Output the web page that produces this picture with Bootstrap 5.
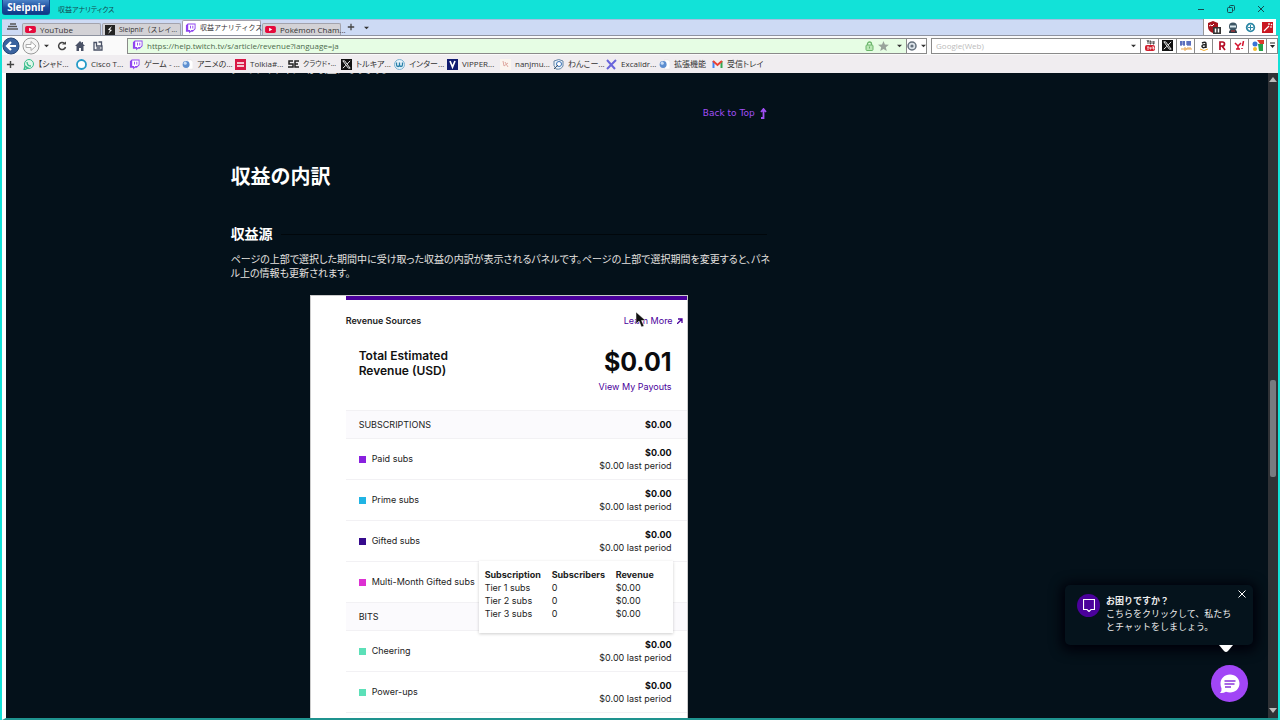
<!DOCTYPE html>
<html lang="ja">
<head>
<meta charset="utf-8">
<meta name="viewport" content="width=device-width, initial-scale=1">
<title>収益アナリティクス</title>
<link href="https://cdn.jsdelivr.net/npm/bootstrap@5.3.0/dist/css/bootstrap.min.css" rel="stylesheet">
<style>
:root{--teal:#12e2d8;--ink:#04111a;--violet:#4b019b}
body{font-family:"Open Sans","Noto Sans CJK JP",sans-serif;font-size:9px;line-height:12px;color:#333;background:var(--teal)}
svg{flex:none;display:block}
button{border:0;background:none;padding:0;color:inherit}
.ui{font-feature-settings:"palt";font-size:8px}
.titlebar{height:19px;color:#124b50}
.compact{font-size:7px}
.brand{width:48px;height:15px;margin-left:2px;background:linear-gradient(#4a83c8,#1c4c9c 55%,#0d3b86);color:#fff;font:bold 10px/14px "Noto Sans",sans-serif;border-radius:0 0 3px 3px;border:1px solid #16458e;border-top:0}
.winbtn{width:30px;height:17px}
.tabrow{height:16px;background:#cddaf4;border-top:1px solid #a9bde0;margin-left:2px}
.tab{width:79px;height:12px;margin-right:1px;background:#d3d2d6;border:1px solid #a3a3ad;border-bottom:0;padding:0 2px;border-radius:2px 2px 0 0;color:#333}
.tab.current{background:#fff;height:15px}
.exts{width:73px;background:#fff;border-left:1px solid #999;height:16px}
.chrome{background:#f0edf0;margin:0 2px 0 2px}
.address{height:20px;background:#fafafa;border-top:1px solid #8e93a0}
.forward{margin-left:2px}
.box{height:16px;border:1px solid #8a8a8a;background:#fff}
.url{background:#e6fde4}
input.plain{border:0;background:none;outline:0;padding:0;height:14px;color:#4c6b4c;font-size:8px;min-width:0}
input.find::placeholder{color:#bbb;opacity:1}
.engine{width:18px;height:14px;border-left:1px solid #8a8a8a}
.marks{height:18px;padding-left:4px}
.marks a{width:53px;color:#333;text-decoration:none;white-space:nowrap}
.page{background:var(--ink);margin:0 2px 0 2px;border-left:4px solid #fff;border-bottom:2px solid #1f938f;color:#e6e3e0;min-height:0}
.article{width:536px;margin-left:17.8%;font-family:"DejaVu Sans","Noto Sans CJK JP",sans-serif}
.article p{font-size:10px;line-height:14px;font-feature-settings:"palt";white-space:nowrap}
.clip{margin-top:-10px}
.totop{color:#a14ff5;font-size:9px;text-decoration:none;margin-top:30px}
h1{font:bold 20px/28px "Noto Sans CJK JP",sans-serif;color:#fff;margin:43px 0 0}
h2{font:bold 14px/20px "Noto Sans CJK JP",sans-serif;color:#fff;margin:33px 0 0}
.rule{height:1px;background:#000;opacity:.55}
.lead-text{margin-top:10px}
.panel{width:378px;margin:14px auto 0;padding-left:35px;background:#fff;color:#222;font-family:Inter,sans-serif;border:1px solid #ccc;border-width:1px 1px 0}
.bar{height:4px;background:var(--violet)}
.panel a{color:var(--violet);text-decoration:none}
.panel b{color:#0b0b0e;font-weight:700}
.head{margin-top:15px}
.total{height:83px;padding:21px 15px 0 13px}
.total h3{font:600 12px/15px Inter,sans-serif;margin:0;color:#111}
.total strong{font:bold 25px/28px Inter,sans-serif;color:#0b0b0e}
.payouts{margin-top:5px}
.sect{height:28px;padding:0 15px 0 13px;background:#fbfafd;border-top:1px solid #f2f1f4}
.line{height:41px;padding:0 15px 0 13px;border-top:1px solid #f2f1f4}
.small-amt{line-height:13px}
.swatch{width:7px;height:7px;margin-right:6px}
.tip{left:133px;top:-1px;width:194px;height:72px;background:#fff;box-shadow:0 1px 3px #0003;padding:7px 0 0 6px;z-index:2}
.tip table{font-size:9px;line-height:13px;color:#222}
.tip th,.tip td{padding:0}
.pointer{left:290px;top:-3px}
.scroll{width:10px;background:#303236}
.thumb{width:6px;height:97px;background:#777b80;border-radius:2px;margin-top:297px}
.help{right:25px;bottom:73px;width:188px;height:60px;background:#05131c;border-radius:5px;box-shadow:0 2px 12px 4px #00000a;padding:9px 8px 0 12px;color:#eee;line-height:13px}
.help .face{width:23px;height:23px;background:var(--violet);flex:none}
.help .words{margin-left:6px}
.help .x{right:7px;top:5px}
.help .tail{right:20px;bottom:-7px}
.chat{right:30px;bottom:16px;width:37px;height:37px;background:#a146f6}
</style>
</head>
<body class="vh-100 d-flex flex-column overflow-hidden">
<svg width="0" height="0" class="position-absolute" aria-hidden="true">
 <symbol id="yt" viewBox="0 0 12 10"><rect y="1" width="12" height="8" rx="2" fill="#e5093c"/><path d="M4.500 3v4L8 5z" fill="#fff"/></symbol>
 <symbol id="tw" viewBox="0 0 12 12"><path d="M3 .5h8.500v6L8.500 9.500H6.500L4.500 11.500V9.500H1v-7z" fill="#8f43f0"/><path d="M3.500 1.500h7V6L9 7.500H7L5.500 9V7.500h-2z" fill="#fff"/><path d="M6 3v3M8.500 3v3" stroke="#8f43f0"/></symbol>
 <symbol id="down" viewBox="0 0 6 4"><path d="M0 .5h6l-3 3z" fill="currentColor"/></symbol>
 <symbol id="plus" viewBox="0 0 10 10"><path d="M5 1v8M1 5h8" stroke="#444" stroke-width="1.600"/></symbol>
 <symbol id="xx" viewBox="0 0 12 12"><path fill="#111" d="M0 0h12v12H0z"/><path d="M2 2h2l6 8H8z" fill="none" stroke="#fff"/><path d="M10 2 6.700 5.500M5.200 7 2 10" stroke="#fff"/></symbol>
 <symbol id="globe" viewBox="0 0 12 12"><path d="M6 1h4l2 2v8H6z" fill="#fff" stroke="#ddd" stroke-width=".5"/><circle cx="4.500" cy="6" r="3.800" fill="#5d8fd0"/><circle cx="3.500" cy="4.500" r="1.700" fill="#c8def6"/></symbol>
</svg>

<header class="titlebar ui d-flex align-items-start flex-shrink-0 me-1">
 <div class="brand text-center">Sleipnir</div>
 <span class="compact ms-2 mt-1 flex-grow-1">収益アナリティクス</span>
 <button class="winbtn" aria-label="最小化"><svg class="m-auto" width="8" height="8"><path d="M1 4.500h6" stroke="#124b50"/></svg></button>
 <button class="winbtn" aria-label="元に戻す"><svg class="m-auto" width="8" height="8" fill="none" stroke="#124b50"><rect x=".5" y="2.500" width="5" height="5" rx="1"/><path d="M2.500 2V1.500a1 1 0 0 1 1-1h3a1 1 0 0 1 1 1v3a1 1 0 0 1-1 1"/></svg></button>
 <button class="winbtn" aria-label="閉じる"><svg class="m-auto" width="8" height="8"><path d="m1 1 6 6m0-6L1 7" stroke="#124b50"/></svg></button>
</header>

<nav class="tabrow ui d-flex align-items-end flex-shrink-0 me-1">
 <button class="mb-1 ms-1" aria-label="タブ一覧"><svg width="16" height="8"><path d="M4 1h6M2 3.500h9M1 6h11" stroke="#555" stroke-width="1.300"/></svg></button>
 <button class="tab d-flex align-items-center gap-1"><svg width="11" height="9"><use href="#yt"/></svg><span>YouTube</span></button>
 <button class="tab d-flex align-items-center gap-1"><svg width="10" height="10"><rect width="10" height="10" fill="#222"/><path d="M7 1 3 4.500l2 1L3 9l4-4-2-.5z" fill="#fff"/></svg><span class="text-nowrap compact">Sleipnir（スレイ...</span></button>
 <button class="tab current d-flex align-items-center gap-1"><svg width="11" height="11"><use href="#tw"/></svg><span class="text-nowrap compact">収益アナリティクス</span></button>
 <button class="tab d-flex align-items-center gap-1"><svg width="11" height="9"><use href="#yt"/></svg><span class="text-nowrap">Pokémon Cham...</span></button>
 <button class="ms-1 mb-1" aria-label="新しいタブ"><svg width="10" height="8" viewBox="0 0 10 10"><use href="#plus"/></svg></button>
 <button class="ms-1 px-1 mb-1" aria-label="タブメニュー"><svg width="5" height="6"><use href="#down"/></svg></button>
 <div class="exts ms-auto d-flex align-items-center justify-content-around">
  <svg width="15" height="13"><path d="M1 2 6 0l5 2v4q0 4-5 6-5-2-5-6z" fill="#a5121c"/><path d="M2 5q2-2 3 0l2-2" stroke="#fff" fill="none"/><rect x="6" y="6" width="8" height="7" fill="#333"/><path d="M8.500 7.500v4M11.500 7.500v4" stroke="#fff" stroke-width="1.500"/></svg>
  <svg width="10" height="11"><circle cx="5" cy="4.500" r="4" fill="#3d5564"/><path d="M2 4.500h6" stroke="#d9e9ee" stroke-width="2"/><path d="M1 11q0-4 4-3 4-1 4 3z" fill="#263844"/><path d="M3 9h4" stroke="#d33"/></svg>
  <svg width="11" height="11"><circle cx="5.500" cy="5.500" r="3.800" fill="#fff" stroke="#2c87a5" stroke-width="1.800"/><path d="M5.500 3v5M3 5.500h5" stroke="#2c87a5"/></svg>
  <svg width="11" height="11"><rect width="11" height="11" fill="#c91721"/><path d="m2 9 5-5M7 1v2M9 3l1-1M8 5h2" stroke="#fff" stroke-width="1.200"/></svg>
 </div>
</nav>

<section class="chrome ui flex-shrink-0">
 <div class="address d-flex align-items-center">
  <button aria-label="戻る"><svg width="18" height="18"><circle cx="9" cy="9" r="8" fill="#3a639f" stroke="#264778"/><path d="M14 9H5m4-4L5 9l4 4" fill="none" stroke="#fff" stroke-width="2.200"/></svg></button>
  <button class="forward" aria-label="進む"><svg width="18" height="18"><circle cx="9" cy="9" r="8" fill="#f5f5f5" stroke="#999"/><path d="M4 7.500h5V4.500L14 9l-5 4.500v-3H4z" fill="#fff" stroke="#aaa"/></svg></button>
  <button class="px-1" aria-label="履歴"><svg width="5" height="4"><use href="#down"/></svg></button>
  <button class="ms-1" aria-label="再読み込み"><svg width="10" height="10"><path d="M7.500 2.500A3.500 3.500 0 1 0 8.500 6" fill="none" stroke="#444" stroke-width="1.500"/><path d="M5 3.500h4v-3z" fill="#444"/></svg></button>
  <button class="ms-2" aria-label="ホーム"><svg width="10" height="10"><path d="M5 0 0 5h1.500v5h2.500V7h2v3h2.500V5H10L8 3V1H7v1z" fill="#4a5266"/></svg></button>
  <button class="ms-2" aria-label="ページ"><svg width="10" height="10" fill="none" stroke="#4a5266" stroke-width="1.300"><path d="M1 9V1.500h2.500V5H9v4zM5.500 1h3v4M3.500 7h4"/></svg></button>
  <div class="box url d-flex align-items-center flex-grow-1 ms-4 px-1 gap-1">
   <svg width="11" height="11"><use href="#tw"/></svg>
   <input class="plain flex-grow-1" aria-label="アドレス" value="https://help.twitch.tv/s/article/revenue?language=ja">
   <svg width="9" height="10"><path d="M2.500 4V3a2 2 0 0 1 4 0v1" fill="none" stroke="#6bb56b" stroke-width="1.300"/><rect x="1" y="4" width="7" height="5.500" rx="1" fill="#b9e7b4" stroke="#6bb56b"/><path d="M4.500 5.500v2" stroke="#6bb56b"/></svg>
   <svg width="11" height="10" class="me-1"><path d="m5.500 0 1.400 3.500 4 .2-3.100 2.500 1 3.800-3.300-2.100L2.200 10l1-3.800L0 3.700l4-.2z" fill="#98a39b"/></svg>
   <svg width="5" height="4"><use href="#down"/></svg>
  </div>
  <button class="box border-start-0 d-flex align-items-center gap-1" aria-label="設定"><svg width="10" height="10"><circle cx="5" cy="5" r="4" fill="#dce4ea" stroke="#65717d" stroke-width="1.500"/><circle cx="5" cy="5" r="1.600" fill="#65717d"/></svg><svg width="5" height="4"><use href="#down"/></svg></button>
  <div class="box ms-1 d-flex align-items-center" style="width:347px">
   <input class="plain find flex-grow-1 ps-1" aria-label="検索" placeholder="Google(Web)">
   <svg width="5" height="4" class="me-1"><use href="#down"/></svg>
   <div class="engine d-flex"><svg class="m-auto" width="12" height="12"><rect x="1" y="5" width="10" height="6" rx="2" fill="#d0202e"/><path d="m3 0 1 2 1-2M4 2v2M6 1v3h1V1zM9 1v3h1V1" fill="none" stroke="#222" stroke-width=".8"/><path d="M3 7h2M4 7v3M6 7v2h1V7M9 6v3h1V7.500H9" fill="none" stroke="#fff" stroke-width=".8"/></svg></div>
   <div class="engine d-flex"><svg class="m-auto" width="11" height="11"><use href="#xx"/></svg></div>
   <div class="engine d-flex"><svg class="m-auto" width="12" height="10"><path d="M0 1h5M0 3h5M1 0v5M4 0v5M6 1h5M6 3h5M8 0v5M10 0v5" stroke="#2640a8"/><path d="M2 7v2M4 7h2v2H4zM7 9V7h4v2M9 7v2" stroke="#e7a24c" fill="none"/></svg></div>
   <div class="engine d-flex"><svg class="m-auto" width="10" height="12"><path d="M3 3q4-2 4 1v4M7 5Q3 4 3 6.500 4 9 7 6.500" fill="none" stroke="#222" stroke-width="1.500"/><path d="M1 9q4 3 8 0" fill="none" stroke="#f2ad32"/></svg></div>
   <div class="engine d-flex"><svg class="m-auto" width="8" height="10"><path d="M2 9V1h2.500a2 2 0 0 1 0 4H2m2 0 3 4" fill="none" stroke="#b50d27" stroke-width="1.700"/></svg></div>
   <div class="engine d-flex"><svg class="m-auto" width="11" height="9"><path d="m1 2 3 3 3-3M4 5v3M2 8h4M9.500 0 8.500 5M8 7v1" fill="none" stroke="#d3112c" stroke-width="1.500"/></svg></div>
   <div class="engine d-flex"><svg class="m-auto" width="12" height="11"><path d="M5 0h7v4H8z" fill="#dd3b2b"/><path d="M6 4h5v7H7z" fill="#26a14b"/><circle cx="3" cy="4" r="2.500" fill="#3974d6"/><circle cx="3" cy="9" r="2" fill="#f3ba2c"/></svg></div>
   <button class="engine d-flex" style="width:11px" aria-label="その他"><svg class="m-auto" width="7" height="7"><path d="M1 1h5" stroke="#222"/><path d="M1 3h5L3.500 6z" fill="#222"/></svg></button>
  </div>
 </div>
 <nav class="marks d-flex align-items-center">
  <button class="me-2" aria-label="追加"><svg width="9" height="9" viewBox="0 0 10 10"><use href="#plus"/></svg></button>
  <a href="#" class="d-flex align-items-center gap-1"><svg width="11" height="11"><circle cx="6" cy="5" r="4.500" fill="#dff7ea" stroke="#39bd8c"/><path d="M1 11 2 7l3 2zM4 3q0 4 4 4" fill="none" stroke="#39bd8c" stroke-width="1.300"/></svg>【シャド...</a>
  <a href="#" class="d-flex align-items-center gap-1"><svg width="11" height="11"><circle cx="5.500" cy="5.500" r="4.500" fill="#fff" stroke="#239ac7" stroke-width="1.800"/></svg>Cisco T...</a>
  <a href="#" class="d-flex align-items-center gap-1"><svg width="11" height="11"><use href="#tw"/></svg>ゲーム - ...</a>
  <a href="#" class="d-flex align-items-center gap-1"><svg width="11" height="11"><use href="#globe"/></svg>アニメの...</a>
  <a href="#" class="d-flex align-items-center gap-1"><svg width="11" height="11"><rect width="11" height="11" fill="#d81745"/><path d="M2 4h7M2 7h7" stroke="#fff" stroke-width="1.500"/></svg>Tolkia#...</a>
  <a href="#" class="d-flex align-items-center gap-1"><svg width="11" height="8"><path d="M5 1H1v3h4v3H0M11 1H7v6h4M7 4h3" fill="none" stroke="#222" stroke-width="1.500"/></svg><span class="compact">クラウド・...</span></a>
  <a href="#" class="d-flex align-items-center gap-1"><svg width="11" height="11"><use href="#xx"/></svg>トルキア...</a>
  <a href="#" class="d-flex align-items-center gap-1"><svg width="11" height="11"><circle cx="5.500" cy="5.500" r="5" fill="#e6f3fa" stroke="#79b1d1"/><path d="M2.500 3.500v2q0 2 1.500 2t1.500-2v-2 2q0 2 1.500 2t1.500-2v-2" fill="none" stroke="#287fa8" stroke-width="1.300"/></svg>インター...</a>
  <a href="#" class="d-flex align-items-center gap-1"><svg width="11" height="11"><rect width="11" height="11" fill="#101c70"/><path d="m3 2 2.500 6L8 2" fill="none" stroke="#fff" stroke-width="1.700"/></svg>VIPPER...</a>
  <a href="#" class="d-flex align-items-center gap-1"><svg width="11" height="11"><rect width="11" height="11" fill="#fbf5ee"/><path d="m3 2 1 5 4-3M5 3l3 5" stroke="#dfaaa0" fill="none"/></svg>nanjmu...</a>
  <a href="#" class="d-flex align-items-center gap-1"><svg width="11" height="11"><path d="M1 2q5-3 9 0v5q-2 4-7 3Q0 7 1 2z" fill="#e9f1f8" stroke="#6485a6"/><circle cx="6" cy="5" r="2.500" fill="#fff" stroke="#3972b8"/><path d="m1 10 4-4" stroke="#456"/></svg>わんこー...</a>
  <a href="#" class="d-flex align-items-center gap-1"><svg width="11" height="11"><path d="m1 1 8 9M10 1 1 10" stroke="#6965db" stroke-width="2"/></svg>Excalidr...</a>
  <a href="#" class="d-flex align-items-center gap-1"><svg width="11" height="11"><use href="#globe"/></svg>拡張機能</a>
  <a href="#" class="d-flex align-items-center gap-1"><svg width="11" height="9"><path d="M1.500 8V1" stroke="#4285f4" stroke-width="2"/><path d="M9.500 8V1" stroke="#34a853" stroke-width="2"/><path d="m1 1 4.500 4L10 1" fill="none" stroke="#ea4335" stroke-width="2"/></svg>受信トレイ</a>
 </nav>
</section>

<div class="page d-flex flex-grow-1 position-relative overflow-hidden">
 <main class="flex-grow-1 overflow-hidden">
  <article class="article">
   <p class="clip mb-0">クリップやチャットが収益になります。</p>
   <div class="d-flex justify-content-end"><a href="#" class="totop d-flex align-items-center gap-1">Back to Top <svg width="8" height="11"><path d="M2 10h2.500V2M2 4l2.500-3L7 4" fill="none" stroke="#a14ff5" stroke-width="1.800"/></svg></a></div>
   <h1>収益の内訳</h1>
   <div class="d-flex align-items-end"><h2>収益源</h2><div class="rule flex-grow-1 ms-2 mb-2"></div></div>
   <p class="lead-text mb-0">ページの上部で選択した期間中に受け取った収益の内訳が表示されるパネルです。ページの上部で選択期間を変更すると、パネ<br>ル上の情報も更新されます。</p>
   <section class="panel">
    <div class="bar"></div>
    <div class="head d-flex justify-content-between pe-1 position-relative">
     <span class="fw-semibold">Revenue Sources</span>
     <a href="#" class="d-flex align-items-center gap-1">Learn More <svg width="6" height="6"><path d="M1 1h4v4M5 1 0 6" fill="none" stroke="#4b019b" stroke-width="1.300"/></svg></a>
     <svg class="pointer position-absolute" width="10" height="16"><path d="M0 0v12l3-3 2.500 6L8 14 5.500 8.500H9.500z" fill="#111" stroke="#fff" stroke-width=".5"/></svg>
    </div>
    <div class="total d-flex justify-content-between">
     <h3>Total Estimated<br>Revenue (USD)</h3>
     <div class="text-end"><strong class="d-block">$0.01</strong><a href="#" class="payouts d-block">View My Payouts</a></div>
    </div>
    <div class="sect d-flex align-items-center justify-content-between"><span>SUBSCRIPTIONS</span><b>$0.00</b></div>
    <div class="line d-flex align-items-center"><i class="swatch" style="background:#8920df"></i><span class="flex-grow-1">Paid subs</span><div class="text-end small-amt"><b>$0.00</b><br>$0.00 last period</div></div>
    <div class="line d-flex align-items-center"><i class="swatch" style="background:#20b4e4"></i><span class="flex-grow-1">Prime subs</span><div class="text-end small-amt"><b>$0.00</b><br>$0.00 last period</div></div>
    <div class="line d-flex align-items-center"><i class="swatch" style="background:#360a8d"></i><span class="flex-grow-1">Gifted subs</span><div class="text-end small-amt"><b>$0.00</b><br>$0.00 last period</div></div>
    <div class="line d-flex align-items-center position-relative"><i class="swatch" style="background:#dd31d2"></i><span>Multi-Month Gifted subs</span>
     <div class="tip position-absolute"><table><thead><tr><th style="width:67px">Subscription</th><th style="width:64px">Subscribers</th><th>Revenue</th></tr></thead><tbody><tr><td>Tier 1 subs</td><td>0</td><td>$0.00</td></tr><tr><td>Tier 2 subs</td><td>0</td><td>$0.00</td></tr><tr><td>Tier 3 subs</td><td>0</td><td>$0.00</td></tr></tbody></table></div>
    </div>
    <div class="sect d-flex align-items-center"><span>BITS</span></div>
    <div class="line d-flex align-items-center"><i class="swatch" style="background:#5ce0b8"></i><span class="flex-grow-1">Cheering</span><div class="text-end small-amt"><b>$0.00</b><br>$0.00 last period</div></div>
    <div class="line d-flex align-items-center"><i class="swatch" style="background:#5ce0b8"></i><span class="flex-grow-1">Power-ups</span><div class="text-end small-amt"><b>$0.00</b><br>$0.00 last period</div></div>
    <div class="line"></div>
   </section>
  </article>
 </main>
 <div class="scroll d-flex flex-column align-items-center justify-content-between py-1 flex-shrink-0">
  <svg width="8" height="6"><path d="M0 5h8L4 0z" fill="#bbb"/></svg>
  <div class="thumb mb-auto"></div>
  <svg width="8" height="6"><path d="M0 0h8L4 5z" fill="#bbb"/></svg>
 </div>
 <aside class="help position-absolute d-flex">
  <span class="face rounded-circle d-flex"><svg class="m-auto" width="12" height="13"><path d="M.5.5h11v10H8l-2 2-2-2H.5z" fill="none" stroke="#fff" stroke-width="1.200"/></svg></span>
  <div class="words text-nowrap"><b>お困りですか？</b><br>こちらをクリックして、私たち<br>とチャットをしましょう。</div>
  <button class="x position-absolute" aria-label="閉じる"><svg width="8" height="8"><path d="m.5.5 7 7m0-7-7 7" stroke="#fff"/></svg></button>
  <svg class="tail position-absolute" width="14" height="7"><path d="M0 0h14L9 6q-2 2-4 0z" fill="#fff"/></svg>
 </aside>
 <button class="chat position-absolute rounded-circle" aria-label="チャット"><svg class="m-auto" width="21" height="20"><path d="M11 .5c5.500 0 9.500 4 9.500 9s-4 9-9.500 9q-2 0-4-.8Q4 19.500 1 19q2-2 1.500-4.500-1-2-1-5c0-5 4-9 9.500-9z" fill="#fff"/><path d="M5.500 7h11M5.500 10h10M6 13h6" stroke="#8a34dc" stroke-width="1.300"/></svg></button>
</div>
<script src="https://cdn.jsdelivr.net/npm/bootstrap@5.3.0/dist/js/bootstrap.bundle.min.js"></script>
</body>
</html>
